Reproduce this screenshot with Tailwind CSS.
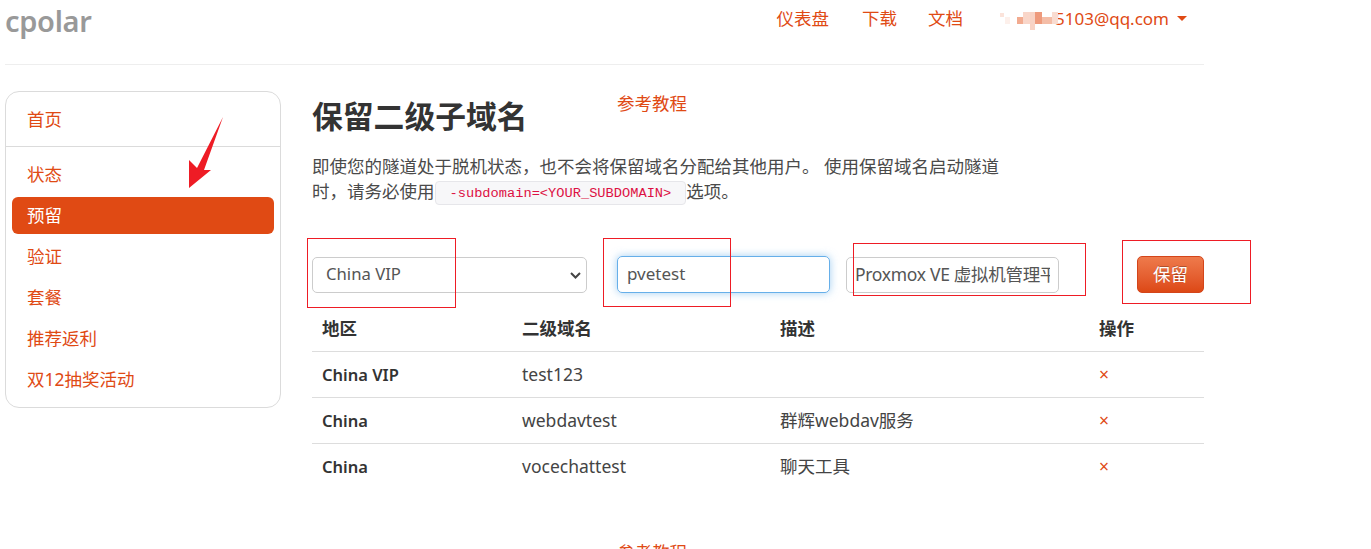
<!DOCTYPE html>
<html lang="zh">
<head>
<meta charset="utf-8">
<script src="https://cdn.jsdelivr.net/npm/@tailwindcss/browser@4"></script>
</head>
<body class="bg-white overflow-hidden">
<div class="relative h-[549px] w-[1371px] overflow-hidden font-['Noto_Sans','Noto_Sans_CJK_SC',sans-serif] text-[17.5px] leading-[25px] text-[#444]">
  <div class="ml-[5px] w-[1199px]">
    <header class="flex h-[65px] justify-between border-b border-[#eeeeee]">
      <a class="mt-[1px] h-[40px] text-[29px] font-semibold leading-[40px] tracking-[-0.3px] text-[#999999]">cpolar</a>
      <nav class="flex h-[36px] items-center pr-[17px] text-[#e04a14]">
        <a>仪表盘</a>
        <a class="ml-[33px]">下载</a>
        <a class="ml-[31px]">文档</a>
        <a class="relative ml-[34px] flex items-center">
          <span class="w-[58px]"></span><span class="text-[17px]">5103@qq.com</span>
          <span class="ml-[8px] h-0 w-0 border-x-[5px] border-t-[5px] border-x-transparent border-t-[#e04a14]"></span>
          <span class="absolute left-[3px] top-[7px] h-[4px] w-[4px] bg-[#fbe3da]"></span>
          <span class="absolute left-[8px] top-[11px] h-[7px] w-[5px] bg-[#fdf0eb]"></span>
          <span class="absolute left-[20px] top-[11px] h-[7px] w-[6px] bg-[#f2ab90]"></span>
          <span class="absolute left-[26px] top-[6px] h-[12px] w-[7px] bg-[#f9d6c9]"></span>
          <span class="absolute left-[33px] top-[6px] h-[18px] w-[5px] bg-[#f8d3c5]"></span>
          <span class="absolute left-[38px] top-[6px] h-[12px] w-[7px] bg-[#ee9a7c]"></span>
          <span class="absolute left-[45px] top-[11px] h-[7px] w-[10px] bg-[#f4bda7]"></span>
          <span class="absolute left-[55px] top-[6px] h-[12px] w-[6px] bg-[#f9dcd1]"></span>
        </a>
      </nav>
    </header>

    <div class="flex items-start">
      <aside class="mt-[26px] h-[317px] w-[276px] rounded-[14px] border border-[#dbdbdb] text-[#e04a14]">
        <a class="flex h-[55px] items-center border-b border-[#dbdbdb] pl-[21px] pt-[1px]">首页</a>
        <ul class="flex flex-col gap-[4px] px-[6px] pt-[9px]">
          <li class="flex h-[37px] items-center pl-[15px]">状态</li>
          <li class="flex h-[37px] items-center rounded-[6px] bg-[#e04a14] pl-[15px] text-white">预留</li>
          <li class="flex h-[37px] items-center pl-[15px]">验证</li>
          <li class="flex h-[37px] items-center pl-[15px]">套餐</li>
          <li class="flex h-[37px] items-center pl-[15px]">推荐返利</li>
          <li class="flex h-[37px] items-center pl-[15px]">双12抽奖活动</li>
        </ul>
      </aside>

      <main class="ml-[31px] w-[892px]">
        <div class="flex h-[60px] items-start pt-[26px]">
          <h1 class="w-[305px] text-[30.8px] font-bold leading-[50px] text-[#333333]">保留二级子域名</h1>
          <a class="text-[#e04a14]">参考教程</a>
        </div>
        <p class="mt-[29px] w-[700px] text-[#4a4a4a]">即使您的隧道处于脱机状态，也不会将保留域名分配给其他用户。 使用保留域名启动隧道时，请务必使用<code class="inline-block h-[24px] rounded-[4px] border border-[#e6e6ea] bg-[#f7f7f9] px-[14px] align-middle font-['Liberation_Mono',monospace] text-[13.7px] leading-[23px] text-[#dd1144]">-subdomain=&lt;YOUR_SUBDOMAIN&gt;</code>选项。</p>

        <form class="mt-[51px] flex items-center">
          <div class="relative h-[36px] w-[275px] rounded-[5px] border border-[#cccccc] pl-[13px] text-[16.7px] leading-[31px] text-[#555555]">China VIP
            <svg class="absolute right-[5px] top-[13px]" width="11" height="9" viewBox="0 0 11 9"><path d="M1 2l4.500 4.500L10 2" fill="none" stroke="#444" stroke-width="2"/></svg>
          </div>
          <input class="ml-[30px] h-[37px] w-[213px] rounded-[5px] border border-[#66afe9] px-[9px] pb-[2px] text-[17px] text-[#555555] shadow-[0_0_8px_rgba(102,175,233,0.6)] outline-none" value="pvetest">
          <input class="ml-[16px] h-[36px] w-[213px] rounded-[5px] border border-[#cccccc] px-[8px] pb-[2px] tracking-[-0.3px] text-[#555555] outline-none" value="Proxmox VE 虚拟机管理平台">
          <button type="button" class="ml-[78px] h-[37px] w-[67px] rounded-[5px] border border-[#d4451a] bg-gradient-to-b from-[#ee7a4b] to-[#dd4814] text-white [text-shadow:0_-1px_0_rgba(0,0,0,0.25)]">保留</button>
        </form>

        <table class="mt-[13px] w-[892px] table-fixed border-collapse">
          <thead>
            <tr class="h-[45px] border-b border-[#dddddd] text-left font-bold text-[#333333]">
              <th class="w-[200px] pl-[10px]">地区</th>
              <th class="w-[258px] pl-[10px]">二级域名</th>
              <th class="w-[319px] pl-[10px]">描述</th>
              <th class="pl-[10px]">操作</th>
            </tr>
          </thead>
          <tbody>
            <tr class="h-[46px] border-b border-[#dddddd]">
              <td class="pl-[10px] pt-[1px] text-[16.5px] font-semibold text-[#333333]">China VIP</td>
              <td class="pl-[10px] pt-[1px]">test123</td>
              <td class="pl-[10px] pt-[1px]"></td>
              <td class="pl-[10px] pt-[1px] text-[#e04a14]">×</td>
            </tr>
            <tr class="h-[46px] border-b border-[#dddddd]">
              <td class="pl-[10px] pt-[1px] text-[16.5px] font-semibold text-[#333333]">China</td>
              <td class="pl-[10px] pt-[1px]">webdavtest</td>
              <td class="pl-[10px] pt-[1px]">群辉webdav服务</td>
              <td class="pl-[10px] pt-[1px] text-[#e04a14]">×</td>
            </tr>
            <tr class="h-[46px]">
              <td class="pl-[10px] text-[16.5px] font-semibold text-[#333333]">China</td>
              <td class="pl-[10px]">vocechattest</td>
              <td class="pl-[10px]">聊天工具</td>
              <td class="pl-[10px] text-[#e04a14]">×</td>
            </tr>
          </tbody>
        </table>
        <a class="mt-[51px] ml-[305px] block text-[#e04a14]">参考教程</a>
      </main>
    </div>
  </div>

  <svg class="absolute left-[185px] top-[113px]" width="42" height="77" viewBox="0 0 42 77"><path d="M38 4L19 57l7 0L4 75 4 47 12 55Z" fill="#ee1c25"/></svg>
  <div class="absolute left-[307px] top-[238px] h-[70px] w-[149px] border border-[#ee1c25]"></div>
  <div class="absolute left-[603px] top-[238px] h-[69px] w-[128px] border border-[#ee1c25]"></div>
  <div class="absolute left-[853px] top-[243px] h-[53px] w-[233px] border border-[#ee1c25]"></div>
  <div class="absolute left-[1122px] top-[240px] h-[64px] w-[129px] border border-[#ee1c25]"></div>
</div>
</body>
</html>
